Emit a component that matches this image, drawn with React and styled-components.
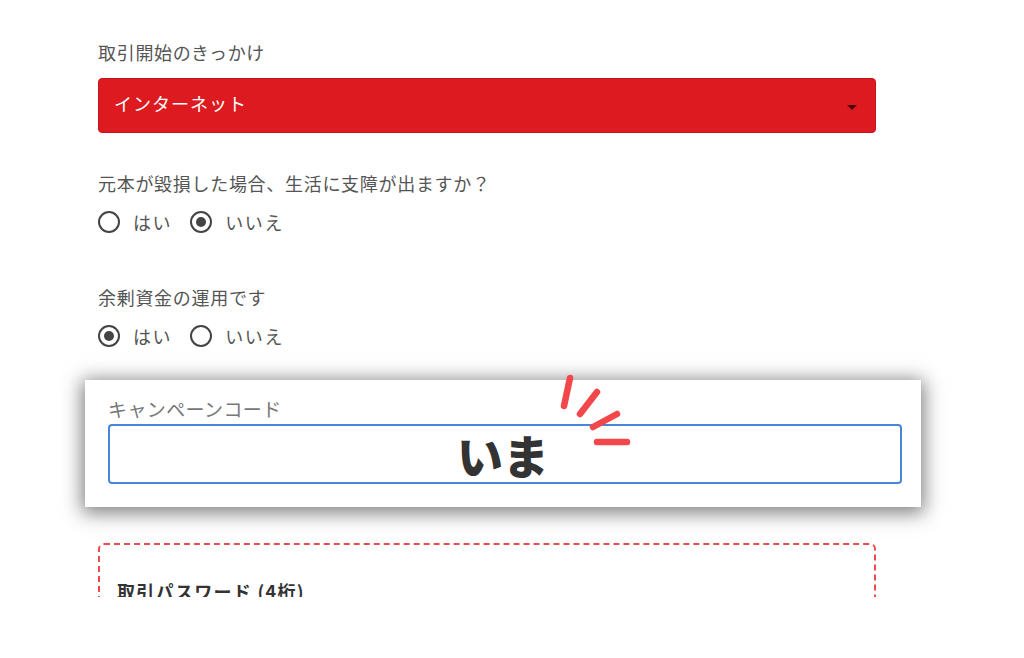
import React from "react";
import styled, { createGlobalStyle } from "styled-components";

const Global = createGlobalStyle`
  html, body { margin: 0; padding: 0; background: #fff; }
  body { font-family: "Noto Sans CJK JP", "Noto Sans", sans-serif; }
`;

const Viewport = styled.div`
  width: 1024px;
  height: 597px;
  overflow: hidden;
  background: #fff;
`;

const Column = styled.div`
  width: 778px;
  margin-left: 98px;
  padding-top: 40px;
  display: flex;
  flex-direction: column;
`;

const Label = styled.div`
  font-size: 18px;
  line-height: 24px;
  letter-spacing: 0.7px;
  color: #555;
  margin-top: ${(p) => p.$mt || 0}px;
`;

const Select = styled.div`
  margin-top: 14px;
  height: 55px;
  box-sizing: border-box;
  background: #dc1a1f;
  border: 1px solid #c7161b;
  border-radius: 4px;
  display: flex;
  align-items: center;
  justify-content: space-between;
  padding: 0 18px 6px 15px;
  color: #fff;
  font-size: 18px;
  letter-spacing: 1px;
`;

const Caret = styled.span`
  width: 0;
  height: 0;
  border-left: 5px solid transparent;
  border-right: 5px solid transparent;
  border-top: 5px solid rgba(40, 0, 0, 0.8);
  margin-top: 9px;
`;

const RadioRow = styled.div`
  margin-top: 15px;
  height: 24px;
  display: flex;
  align-items: center;
  gap: 18px;
`;

const Option = styled.label`
  display: flex;
  align-items: center;
  gap: 13px;
  font-size: 18px;
  letter-spacing: 1.6px;
  color: #555;
`;

const Circle = styled.span`
  width: 22px;
  height: 22px;
  box-sizing: border-box;
  border: 2px solid #444;
  border-radius: 50%;
  display: flex;
  align-items: center;
  justify-content: center;
  &::after {
    content: "";
    width: 10px;
    height: 10px;
    border-radius: 50%;
    background: ${(p) => (p.$on ? "#444" : "transparent")};
  }
`;

const Card = styled.div`
  position: relative;
  margin-top: 32px;
  margin-left: -13px;
  width: 836px;
  box-sizing: border-box;
  padding: 17px 19px 23px 23px;
  background: #fff;
  box-shadow: 0 3px 18px 3px rgba(0, 0, 0, 0.5);
`;

const CardLabel = styled.div`
  font-size: 19px;
  line-height: 24px;
  color: #777;
  letter-spacing: 0.4px;
`;

const CodeField = styled.div`
  margin-top: 3px;
  height: 60px;
  box-sizing: border-box;
  border: 2px solid #4a86d6;
  border-radius: 4px;
  display: flex;
  align-items: center;
  justify-content: center;
  font-size: 46px;
  font-weight: 900;
  color: #333;
  line-height: 1;
  padding-right: 4px;
`;

const Sparks = styled.svg`
  position: absolute;
  left: 470px;
  top: -8px;
  width: 80px;
  height: 80px;
  overflow: visible;
`;

const DashedBox = styled.div`
  margin-top: 36px;
  height: 120px;
  box-sizing: border-box;
  border: 2px dashed #ec4a4e;
  border-radius: 6px;
  padding: 34px 0 0 17px;
`;

const BoxTitle = styled.div`
  font-size: 18px;
  font-weight: 700;
  line-height: 24px;
  letter-spacing: 1.3px;
  color: #333;
`;

function Radio({ on, children }) {
  return (
    <Option>
      <Circle $on={on} />
      {children}
    </Option>
  );
}

export default function App() {
  return (
    <>
      <Global />
      <Viewport>
        <Column>
          <Label>取引開始のきっかけ</Label>
          <Select>
            インターネット
            <Caret />
          </Select>

          <Label $mt={38}>元本が毀損した場合、生活に支障が出ますか？</Label>
          <RadioRow>
            <Radio>はい</Radio>
            <Radio on>いいえ</Radio>
          </RadioRow>

          <Label $mt={51}>余剰資金の運用です</Label>
          <RadioRow>
            <Radio on>はい</Radio>
            <Radio>いいえ</Radio>
          </RadioRow>

          <Card>
            <CardLabel>キャンペーンコード</CardLabel>
            <CodeField>いま</CodeField>
            <Sparks viewBox="0 0 80 80">
              <g stroke="#f2474b" strokeWidth="6.5" strokeLinecap="round" fill="none">
                <line x1="15" y1="6" x2="9" y2="34" />
                <line x1="42" y1="20" x2="25" y2="42" />
                <line x1="62" y1="42" x2="38" y2="55" />
                <line x1="42" y1="70" x2="72" y2="70" />
              </g>
            </Sparks>
          </Card>

          <DashedBox>
            <BoxTitle>取引パスワード (4桁)</BoxTitle>
          </DashedBox>
        </Column>
      </Viewport>
    </>
  );
}
